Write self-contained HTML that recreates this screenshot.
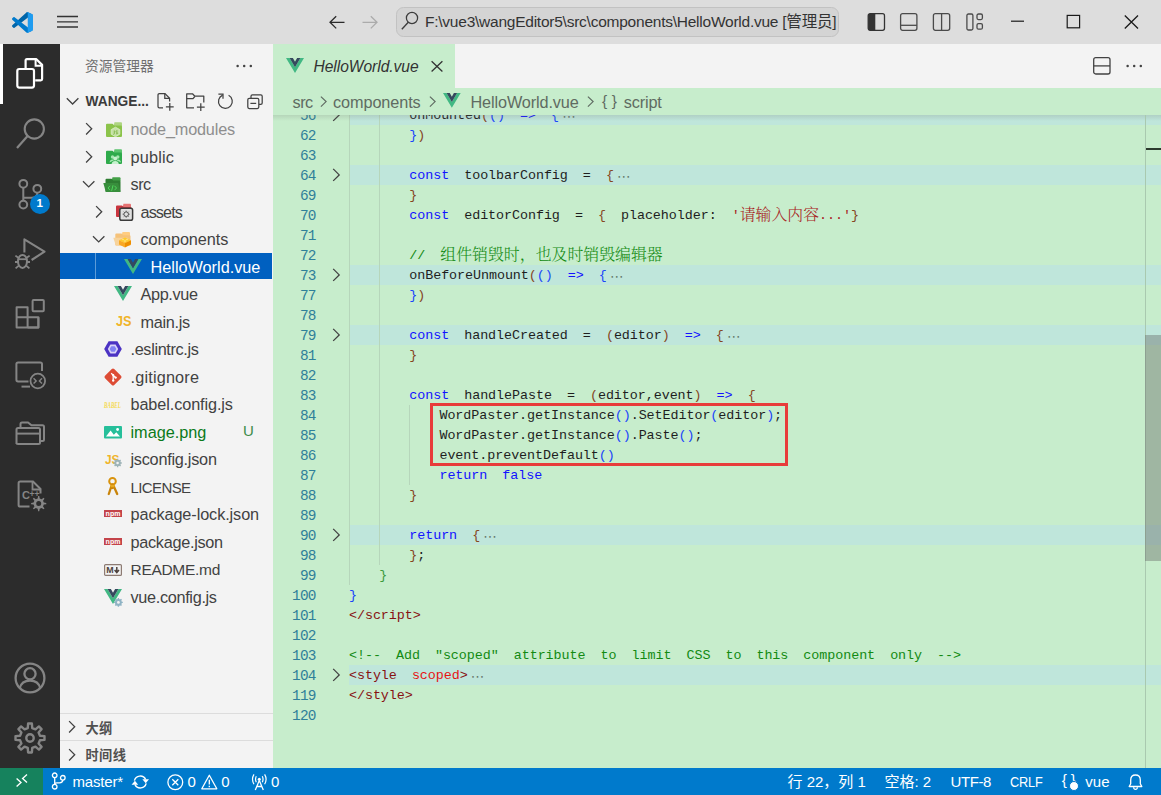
<!DOCTYPE html>
<html lang="zh-CN"><head><meta charset="utf-8"><title>HelloWorld.vue - wangEditor5 - Visual Studio Code</title>
<style>
*{box-sizing:border-box;margin:0;padding:0}
html,body{width:1161px;height:795px;overflow:hidden;background:#c7edcc}
body{position:relative;font-family:"Liberation Sans", "Noto Sans CJK SC", sans-serif;font-size:16.25px;color:#3b3b3b}
.abs{position:absolute}
svg{display:block;overflow:visible}
#titlebar{position:absolute;left:0;top:0;width:1161px;height:44px;background:#dddddd}
#activity{position:absolute;left:0;top:44px;width:60px;height:724px;background:#2c2c2c}
#sidebar{position:absolute;left:60px;top:44px;width:213px;height:724px;background:#f3f3f3;overflow:hidden}
#tabs{position:absolute;left:273px;top:44px;width:888px;height:44px;background:#f3f3f3}
#crumbs{position:absolute;left:273px;top:88px;width:888px;height:27px;background:#c7edcc;color:#5f6b62;z-index:3;white-space:nowrap}
#code{position:absolute;left:273px;top:114px;width:888px;height:654px;background:#c7edcc;overflow:hidden}
#status{position:absolute;left:0;top:768px;width:1161px;height:27px;background:#007acc;color:#fff;font-size:15px;white-space:nowrap}
.t{position:absolute;white-space:nowrap;line-height:1}
.row{position:absolute;left:0;width:213px;height:27.5px}
.row .lbl{position:absolute;top:0;line-height:27.5px;white-space:nowrap;font-size:16.25px;color:#3b3b3b}
.ln{position:absolute;left:0;width:42.800px;text-align:right;color:#2f8099;font-family:"Liberation Mono", "Noto Serif CJK SC", monospace;font-size:14.4px;line-height:20px;height:20px;letter-spacing:-0.680px;padding-top:1.700px}
.cl{position:absolute;left:76px;white-space:pre;font-family:"Liberation Mono", "Noto Serif CJK SC", monospace;font-size:13.4px;line-height:20px;height:20px;letter-spacing:-0.067px;word-spacing:7.1px;color:#1e1e1e;padding-top:1.5px}
.fold{position:absolute;left:76px;width:812px;height:20px;background:#bfe6db}
.k{color:#1212ff}.b1{color:#1a45fa}.b2{color:#3d9a3d}.b3{color:#85461f}.s{color:#a82222}.c{color:#128a12}.tg{color:#871212}.at{color:#e61414}
.cj{font-family:"Noto Serif CJK SC",serif;font-size:15.9px;letter-spacing:0;font-weight:300;line-height:0;position:relative;top:1px}
.el{font-family:"DejaVu Sans",sans-serif;font-size:13.500px;letter-spacing:0;margin-left:3.200px;position:relative;top:2px;line-height:0;color:#667a6d}
.guide{position:absolute;width:1px;background:#b6d6bb}
</style></head>
<body>
<div id="titlebar">
<svg class="abs" style="left:12px;top:11.500px" width="21" height="21" viewBox="0 0 100 100">
<path d="M96.46 10.8L75.86 0.88C73.47-0.27 70.62 0.21 68.75 2.08L1.3 63.58C-0.52 65.24-0.51 68.09 1.3 69.75L6.81 74.75C8.3 76.1 10.53 76.2 12.13 74.99L93.36 13.37C96.09 11.3 100 13.25 100 16.67V16.43C100 14.03 98.62 11.84 96.46 10.8Z" fill="#0065A9"/>
<path d="M96.46 89.2L75.86 99.12C73.47 100.27 70.62 99.79 68.75 97.92L1.3 36.42C-0.52 34.76-0.51 31.91 1.3 30.25L6.81 25.25C8.3 23.9 10.53 23.8 12.13 25.01L93.36 86.63C96.09 88.7 100 86.75 100 83.33V83.57C100 85.97 98.62 88.16 96.46 89.2Z" fill="#007ACC"/>
<path d="M75.86 99.13C73.47 100.27 70.62 99.79 68.75 97.92C71.06 100.22 75 98.59 75 95.33V4.67C75 1.41 71.06-0.22 68.75 2.08C70.62 0.21 73.47-0.27 75.86 0.87L96.46 10.78C98.62 11.82 100 14.01 100 16.41V83.59C100 85.99 98.62 88.18 96.46 89.22L75.86 99.13Z" fill="#1F9CF0"/>
</svg>
<svg class="abs" style="left:57px;top:14px" width="22" height="16" viewBox="0 0 22 16"><path d="M0 2.5H21M0 7.8H21M0 13H21" stroke="#333" stroke-width="1.3" fill="none"/></svg>
<svg class="abs" style="left:329px;top:15px" width="16" height="14" viewBox="0 0 16 14"><path d="M15.5 7.3H1.2M7.2 1.2L1 7.3L7.2 13.4" stroke="#2b2b2b" stroke-width="1.3" fill="none"/></svg>
<svg class="abs" style="left:362px;top:15px" width="16" height="14" viewBox="0 0 16 14"><path d="M0.5 7.3H14.8M8.8 1.2L15 7.3L8.8 13.4" stroke="#ababab" stroke-width="1.3" fill="none"/></svg>
<div class="abs" style="left:396px;top:7px;width:443px;height:30px;border:1px solid #c2c2c2;border-radius:7.500px;background:#d4d4d4"></div>
<svg class="abs" style="left:401px;top:12px" width="18" height="18" viewBox="0 0 18 18"><circle cx="11" cy="6" r="5.600" stroke="#3c3c3c" stroke-width="1.250" fill="none"/><path d="M7.300 10.200L0.800 17.300" stroke="#3c3c3c" stroke-width="1.350" fill="none"/></svg>
<div class="t" id="cmdtxt" style="left:425px;top:14.400px;font-size:15.500px;color:#333;letter-spacing:-0.240px">F:\vue3\wangEditor5\src\components\HelloWorld.vue [管理员]</div>
<svg class="abs" style="left:867px;top:13px" width="19" height="18" viewBox="0 0 19 18"><rect x="1.2" y="0.7" width="16.3" height="16.6" rx="2" stroke="#333" stroke-width="1.3" fill="none"/><path d="M1.2 2.2Q1.2 0.7 2.7 0.7H8.3V17.3H2.7Q1.2 17.3 1.2 15.8Z" fill="#333"/></svg>
<svg class="abs" style="left:899px;top:13px" width="19" height="18" viewBox="0 0 19 18"><rect x="1.6" y="0.7" width="16.3" height="16.6" rx="2" stroke="#4a4a4a" stroke-width="1.3" fill="none"/><path d="M1.6 12.3H17.9" stroke="#4a4a4a" stroke-width="1.3"/></svg>
<svg class="abs" style="left:932px;top:13px" width="19" height="18" viewBox="0 0 19 18"><rect x="1.4" y="0.7" width="16.3" height="16.6" rx="2" stroke="#4a4a4a" stroke-width="1.3" fill="none"/><path d="M9.6 0.7V17.3" stroke="#4a4a4a" stroke-width="1.3"/></svg>
<svg class="abs" style="left:966px;top:13px" width="18" height="18" viewBox="0 0 18 18"><rect x="0.9" y="1" width="6" height="16" rx="1.5" stroke="#4a4a4a" stroke-width="1.3" fill="none"/><rect x="11" y="1" width="5.4" height="5.6" rx="1.5" stroke="#4a4a4a" stroke-width="1.3" fill="none"/><rect x="11" y="10.6" width="5.4" height="5.6" rx="1.5" stroke="#4a4a4a" stroke-width="1.3" fill="none"/></svg>
<svg class="abs" style="left:1011px;top:20px" width="14" height="3" viewBox="0 0 14 3"><path d="M0 1.2H13" stroke="#1a1a1a" stroke-width="1.2"/></svg>
<svg class="abs" style="left:1066px;top:14px" width="15" height="15" viewBox="0 0 15 15"><rect x="1.2" y="1.4" width="12.4" height="12.4" stroke="#1a1a1a" stroke-width="1.2" fill="none"/></svg>
<svg class="abs" style="left:1124px;top:15px" width="15" height="14" viewBox="0 0 15 14"><path d="M0.8 0.5L14 13.5M14 0.5L0.8 13.5" stroke="#1a1a1a" stroke-width="1.3"/></svg>
</div>
<div id="activity">
<div class="abs" style="left:0;top:0;width:2.5px;height:60px;background:#ffffff"></div>
<svg class="abs" style="left:15px;top:13px" width="31" height="33" viewBox="0 0 31 33">
<path d="M10.600 11V3.500Q10.600 2.200 11.900 2.200H21.400L27.100 7.900V22.100Q27.100 23.400 25.800 23.400H20.200" stroke="#fff" stroke-width="2.200" fill="none" stroke-linejoin="round"/>
<path d="M20.600 2.400V8.700H26.900" stroke="#fff" stroke-width="2" fill="none"/>
<rect x="2.300" y="12" width="16.700" height="18.600" rx="2" stroke="#fff" stroke-width="2.200" fill="none"/>
</svg>
<svg class="abs" style="left:15px;top:73px" width="31" height="33" viewBox="0 0 31 33">
<circle cx="19.3" cy="12" r="9.6" stroke="#858585" stroke-width="2.1" fill="none"/>
<path d="M12.6 19L2 31" stroke="#858585" stroke-width="2.2" fill="none"/>
</svg>
<svg class="abs" style="left:17px;top:134px" width="28" height="33" viewBox="0 0 28 33">
<circle cx="6.3" cy="5.8" r="3.9" stroke="#858585" stroke-width="2" fill="none"/>
<circle cx="6.3" cy="26.6" r="3.9" stroke="#858585" stroke-width="2" fill="none"/>
<circle cx="20.3" cy="10.8" r="3.9" stroke="#858585" stroke-width="2" fill="none"/>
<path d="M6.3 9.8V22.6M20.3 14.8Q20.3 19.8 14.5 19.8H6.5" stroke="#858585" stroke-width="2" fill="none"/>
</svg>
<div class="abs" style="left:30px;top:150px;width:19.5px;height:19.5px;border-radius:10px;background:#007acc;color:#fff;font-size:11.5px;font-weight:bold;text-align:center;line-height:19.5px">1</div>
<svg class="abs" style="left:13px;top:193px" width="34" height="34" viewBox="0 0 34 34">
<path d="M11.400 15.600V2.300L31.500 14.600L18.600 23" stroke="#858585" stroke-width="2.100" fill="none" stroke-linejoin="round"/>
<ellipse cx="9.500" cy="24.400" rx="4.500" ry="6.500" stroke="#858585" stroke-width="2" fill="none"/>
<path d="M5.200 22.200H13.800" stroke="#858585" stroke-width="1.800" fill="none"/>
<path d="M2.400 18.600L5.300 20.800M16.600 18.600L13.700 20.800M2 25H5M14 25H17M2.600 31.400L5.800 28.600M16.400 31.400L13.200 28.600" stroke="#858585" stroke-width="1.800" fill="none"/>
</svg>
<svg class="abs" style="left:14px;top:254px" width="32" height="32" viewBox="0 0 32 32">
<path d="M2.6 9.2H13.6V29.4H2.6ZM2.6 19.3H24.4V29.4H13.6M13.6 19.3" stroke="#858585" stroke-width="2" fill="none" stroke-linejoin="round"/>
<path d="M13.6 29.4H24.4V19.3" stroke="#858585" stroke-width="2" fill="none" stroke-linejoin="round"/>
<rect x="18.6" y="2" width="11.2" height="11.2" rx="1" stroke="#858585" stroke-width="2" fill="none"/>
</svg>
<svg class="abs" style="left:14px;top:316px" width="34" height="30" viewBox="0 0 34 30">
<path d="M14.5 21.4H4Q2.4 21.4 2.4 19.8V4Q2.4 2.4 4 2.4H26.4Q28 2.4 28 4V11" stroke="#858585" stroke-width="2" fill="none"/>
<path d="M7.5 26.6H16" stroke="#858585" stroke-width="2" fill="none"/>
<circle cx="23.8" cy="21" r="7.3" stroke="#858585" stroke-width="1.8" fill="none"/>
<path d="M19.6 18.3L22.2 20.9L19.6 23.5M28 18.3L25.4 20.9L28 23.5" stroke="#858585" stroke-width="1.4" fill="none"/>
</svg>
<svg class="abs" style="left:14px;top:376px" width="32" height="26" viewBox="0 0 32 26">
<path d="M2.5 24V9.5Q2.5 8 4 8H24.5Q26 8 26 9.5V22.5Q26 24 24.5 24H4Q2.5 24 2.5 22.500Z" stroke="#858585" stroke-width="2" fill="none"/>
<path d="M2.5 13.6H26" stroke="#858585" stroke-width="2" fill="none"/>
<path d="M6.5 7.6V4Q6.500 2.500 8 2.500H14L17.500 5.200H28.500Q30 5.200 30 6.700V19.500Q30 21 28.500 21H26.500" stroke="#858585" stroke-width="2" fill="none"/>
</svg>
<svg class="abs" style="left:16px;top:435px" width="32" height="34" viewBox="0 0 32 34">
<path d="M13.5 27.5H4.2Q2.600 27.500 2.600 25.900V4.200Q2.600 2.600 4.200 2.600H17L24.500 10V14.500" stroke="#858585" stroke-width="2" fill="none"/>
<path d="M16.5 3V10.500H24" stroke="#858585" stroke-width="1.8" fill="none"/>
<text x="6" y="19.500" font-family="Liberation Sans, sans-serif" font-weight="bold" font-size="11" fill="#858585">C</text>
<text x="13.600" y="18" font-family="Liberation Sans, sans-serif" font-weight="bold" font-size="8.500" fill="#858585" textLength="10" lengthAdjust="spacingAndGlyphs">++</text>
<path d="M21.69 19.50L22.12 17.02L23.28 17.02L23.71 19.50L25.59 20.28L27.65 18.83L28.47 19.65L27.02 21.71L27.80 23.59L30.28 24.02L30.28 25.18L27.80 25.61L27.02 27.49L28.47 29.55L27.65 30.37L25.59 28.92L23.71 29.70L23.28 32.18L22.12 32.18L21.69 29.70L19.81 28.92L17.75 30.37L16.93 29.55L18.38 27.49L17.60 25.61L15.12 25.18L15.12 24.02L17.60 23.59L18.38 21.71L16.93 19.65L17.75 18.83L19.81 20.28Z M25.2 24.6A2.5 2.5 0 1 0 20.2 24.6A2.5 2.5 0 1 0 25.2 24.6Z" fill="#858585" fill-rule="evenodd"/>
</svg>
<svg class="abs" style="left:13px;top:617px" width="34" height="34" viewBox="0 0 34 34">
<circle cx="17" cy="17" r="14.400" stroke="#858585" stroke-width="2.300" fill="none"/>
<circle cx="17" cy="12.800" r="5.600" stroke="#858585" stroke-width="2.300" fill="none"/>
<path d="M6.800 27.200Q8.500 19.600 17 19.600Q25.500 19.600 27.200 27.200" stroke="#858585" stroke-width="2.300" fill="none"/>
</svg>
<svg class="abs" style="left:13px;top:677px" width="34" height="34" viewBox="0 0 34 34">
<path d="M14.77 7.05L15.11 2.52L18.89 2.52L19.23 7.05L22.47 8.39L25.90 5.43L28.57 8.10L25.61 11.53L26.95 14.77L31.48 15.11L31.48 18.89L26.95 19.23L25.61 22.47L28.57 25.90L25.90 28.57L22.47 25.61L19.23 26.95L18.89 31.48L15.11 31.48L14.77 26.95L11.53 25.61L8.10 28.57L5.43 25.90L8.39 22.47L7.05 19.23L2.52 18.89L2.52 15.11L7.05 14.77L8.39 11.53L5.43 8.10L8.10 5.43L11.53 8.39Z" stroke="#858585" stroke-width="2.400" fill="none" stroke-linejoin="round"/>
<circle cx="17" cy="17" r="3.700" stroke="#858585" stroke-width="2.400" fill="none"/>
</svg>
</div>
<div id="sidebar">
<div class="t" id="sbtitle" style="left:25px;top:16px;font-size:13.75px;color:#6f6f6f">资源管理器</div>
<svg class="abs" style="left:176px;top:20px" width="17" height="4" viewBox="0 0 17 4"><circle cx="1.6" cy="2" r="1.25" fill="#424242"/><circle cx="8.2" cy="2" r="1.25" fill="#424242"/><circle cx="14.8" cy="2" r="1.25" fill="#424242"/></svg>
<svg class="abs" style="left:6px;top:53px" width="14" height="9" viewBox="0 0 14 9"><path d="M0.8 1.2L6.6 7L12.4 1.2" stroke="#424242" stroke-width="1.3" fill="none"/></svg>
<div class="t" id="sbsec" style="left:25.500px;top:50.500px;font-size:13.75px;font-weight:bold;color:#3b3b3b">WANGE...</div>
<svg class="abs" style="left:97.400px;top:48.800px" width="19" height="19" viewBox="0 0 19 19">
<path d="M6 14.800H2.400Q1 14.800 1 13.400V2Q1 0.600 2.400 0.600H8L12.600 5.200V8.500" stroke="#424242" stroke-width="1.250" fill="none"/>
<path d="M7.800 0.800V5.400H12.400" stroke="#424242" stroke-width="1.250" fill="none"/>
<path d="M12.800 10V17.800M8.900 13.900H16.700" stroke="#424242" stroke-width="1.250" fill="none"/></svg>
<svg class="abs" style="left:126px;top:48.800px" width="20" height="19" viewBox="0 0 20 19">
<path d="M8 14.800H0.700V0.800H6.500L8.600 3H17.800V9.500" stroke="#424242" stroke-width="1.250" fill="none" stroke-linejoin="round"/>
<path d="M0.700 5.700H7L8.800 3.500" stroke="#424242" stroke-width="1.250" fill="none"/>
<path d="M14.800 10.200V18M10.900 14.100H18.700" stroke="#424242" stroke-width="1.250" fill="none"/></svg>
<svg class="abs" style="left:157px;top:48.800px" width="17" height="17" viewBox="0 0 17 17">
<path d="M5.600 2.100A6.900 6.900 0 1 0 11.600 2.300" stroke="#424242" stroke-width="1.250" fill="none"/>
<path d="M1.400 1.200H6V5.800" stroke="#424242" stroke-width="1.250" fill="none"/></svg>
<svg class="abs" style="left:187px;top:49.700px" width="17" height="16" viewBox="0 0 17 16">
<path d="M4 4V2.200Q4 0.800 5.400 0.800H13.800Q15.200 0.800 15.200 2.200V9Q15.200 10.400 13.800 10.400H12" stroke="#424242" stroke-width="1.250" fill="none"/>
<rect x="0.800" y="4.300" width="11" height="10.200" rx="1.400" stroke="#424242" stroke-width="1.250" fill="none"/>
<path d="M3.400 9.400H9.200" stroke="#424242" stroke-width="1.250" fill="none"/></svg>
<svg class="abs" style="left:24.7px;top:78px" width="9" height="14" viewBox="0 0 9 14"><path d="M1.100 1.100L6.700 6.800L1.100 12.500" stroke="#424242" stroke-width="1.300" fill="none"/></svg>
<div class="abs" style="left:44.8px;top:76.5px"><svg width="18" height="17" viewBox="0 0 18 17"><path d="M9.500 1.200H16Q17 1.200 17 2.200V5H8.500Z" fill="#aed581"/><path d="M1 3.800Q1 2.800 2 2.800H7.500L9.300 4.400H16Q17 4.400 17 5.400V15Q17 16 16 16H2Q1 16 1 15Z" fill="#8bc34a"/><path d="M10.500 6.200L14.800 8.600V13.200L10.500 15.700L6.200 13.200V8.600Z" fill="#c5e1a5" stroke="#dcedc8" stroke-width="0.800"/><path d="M9.300 9.500V12.600Q9.300 13.400 8.400 13.300M11 12.700Q12.600 13.200 12.700 12.300Q12.700 11.600 11.800 11.400Q10.800 11.200 10.900 10.400Q11.200 9.500 12.700 10" stroke="#7cb342" stroke-width="0.900" fill="none"/></svg></div>
<div class="t lbl" style="left:70.5px;top:72px;font-size:16.25px;line-height:27.500px;color:#424242;letter-spacing:-0.18px;color:#8e8e8e">node_modules</div>
<svg class="abs" style="left:24.7px;top:105.5px" width="9" height="14" viewBox="0 0 9 14"><path d="M1.100 1.100L6.700 6.800L1.100 12.500" stroke="#424242" stroke-width="1.300" fill="none"/></svg>
<div class="abs" style="left:44.8px;top:104px"><svg width="18" height="17" viewBox="0 0 18 17"><path d="M9.500 1.200H16Q17 1.200 17 2.200V5H8.500Z" fill="#5bc46f"/><path d="M1 3.800Q1 2.800 2 2.800H7.500L9.300 4.400H16Q17 4.400 17 5.400V15Q17 16 16 16H2Q1 16 1 15Z" fill="#2eaa4b"/><circle cx="7.500" cy="9" r="1.700" fill="#a5e6b0"/><circle cx="12.800" cy="9" r="1.700" fill="#a5e6b0"/><circle cx="10.200" cy="10.600" r="2" fill="#c8f2cf"/><path d="M4.500 14.500Q5 11.500 7.500 11.600Q8.500 11.600 9 12.300M16 14.500Q15.500 11.500 12.800 11.600Q12 11.600 11.400 12.300" fill="#a5e6b0"/><path d="M6.600 16Q7 13 10.200 13Q13.400 13 13.800 16Z" fill="#c8f2cf"/></svg></div>
<div class="t lbl" style="left:70.5px;top:99.5px;font-size:16.25px;line-height:27.500px;color:#424242;letter-spacing:0.2px;">public</div>
<svg class="abs" style="left:21.9px;top:135.5px" width="14" height="9" viewBox="0 0 14 9"><path d="M1 1.200L6.700 6.900L12.400 1.200" stroke="#424242" stroke-width="1.300" fill="none"/></svg>
<div class="abs" style="left:43px;top:131.5px"><svg width="19" height="17" viewBox="0 0 19 17"><path d="M9.500 1.200H16.500Q17.500 1.200 17.500 2.200V5H8.500Z" fill="#43a047"/><path d="M2.500 3.800Q2.500 2.800 3.500 2.800H8.500L10.300 4.400H16.500Q17.500 4.400 17.500 5.400V15Q17.500 16 16.500 16H3.500Q2.500 16 2.500 15Z" fill="#2e7d32"/><path d="M0.300 7H15.200L17.600 16H2.800Z" fill="#388e3c"/><path d="M7 9.800L5 12L7 14.200M11.500 9.800L13.500 12L11.500 14.200M10 9.300L8.600 14.800" stroke="#4fd85c" stroke-width="1" fill="none"/></svg></div>
<div class="t lbl" style="left:70.5px;top:127px;font-size:16.25px;line-height:27.500px;color:#424242;letter-spacing:-0.5px;">src</div>
<svg class="abs" style="left:35.2px;top:160.5px" width="9" height="14" viewBox="0 0 9 14"><path d="M1.100 1.100L6.700 6.800L1.100 12.500" stroke="#424242" stroke-width="1.300" fill="none"/></svg>
<div class="abs" style="left:54.8px;top:158.5px"><svg width="19" height="18" viewBox="0 0 19 18"><path d="M8.500 0.800H15Q16 0.800 16 1.800V5H7.500Z" fill="#e57373"/><path d="M1 3.400Q1 2.400 2 2.400H7L8.800 4H15.500Q16.500 4 16.500 5V13Q16.500 14 15.500 14H2Q1 14 1 13Z" fill="#c9353f"/><rect x="4.800" y="5.200" width="12.800" height="12" rx="1.800" fill="#e0e0e0" stroke="#3a3a3a" stroke-width="1.500"/><circle cx="11.200" cy="11.200" r="2.300" stroke="#555" stroke-width="1" fill="none"/><path d="M11.200 7.600V9M11.200 13.400V14.800M7.600 11.200H9M13.400 11.200H14.800M8.700 8.700L9.600 9.600M12.800 12.800L13.700 13.700M13.700 8.700L12.800 9.600M8.700 13.700L9.600 12.800" stroke="#555" stroke-width="0.800"/></svg></div>
<div class="t lbl" style="left:80.5px;top:154.5px;font-size:16.25px;line-height:27.500px;color:#424242;letter-spacing:-0.9px;">assets</div>
<svg class="abs" style="left:32.4px;top:190.5px" width="14" height="9" viewBox="0 0 14 9"><path d="M1 1.200L6.700 6.900L12.400 1.200" stroke="#424242" stroke-width="1.300" fill="none"/></svg>
<div class="abs" style="left:53px;top:186.5px"><svg width="19" height="17" viewBox="0 0 19 17"><path d="M9.500 1H16Q17 1 17 2V5H8.500Z" fill="#ffcc80"/><path d="M2.300 3.600Q2.300 2.600 3.300 2.600H8.500L10.300 4.200H16.500Q17.500 4.200 17.500 5.200V13.500Q17.500 14.500 16.500 14.500H3.300Q2.300 14.500 2.300 13.500Z" fill="#f5c27a"/><path d="M0.300 6.800H15L17.500 14.500H2.800Z" fill="#f7d39b"/><path d="M12 6.500L18 9.200L12 12L6 9.200Z" fill="#ffca28"/><path d="M6 9.200L12 12V16.500L6 13.600Z" fill="#f9a825"/><path d="M18 9.200L12 12V16.500L18 13.600Z" fill="#ef8f00"/><ellipse cx="10" cy="8.600" rx="1.400" ry="0.700" fill="#ffe082"/><ellipse cx="14" cy="8.600" rx="1.400" ry="0.700" fill="#ffe082"/><ellipse cx="12" cy="10" rx="1.400" ry="0.700" fill="#ffe082"/></svg></div>
<div class="t lbl" style="left:80.5px;top:182px;font-size:16.25px;line-height:27.500px;color:#424242;letter-spacing:-0.08px;">components</div>
<div class="abs" style="left:0;top:209.3px;width:212.300px;height:25.700px;background:#0060c0"></div>
<div class="abs" style="left:35px;top:209.3px;width:1px;height:25.700px;background:#5c9bd8"></div>
<div class="abs" style="left:63.5px;top:214.8px"><svg width="18" height="15" viewBox="0 0 18 15"><path d="M0 0H3.600L9 9.200L14.400 0H18L9 15Z" fill="#41b883"/><path d="M3.600 0H6.900L9 3.700L11.100 0H14.400L9 9.200Z" fill="#35495e"/></svg></div>
<div class="t lbl" style="left:90.5px;top:209.5px;font-size:16.25px;line-height:27.500px;color:#424242;letter-spacing:0px;color:#fff">HelloWorld.vue</div>
<div class="abs" style="left:53.5px;top:242.3px"><svg width="18" height="15" viewBox="0 0 18 15"><path d="M0 0H3.600L9 9.200L14.400 0H18L9 15Z" fill="#41b883"/><path d="M3.600 0H6.900L9 3.700L11.100 0H14.400L9 9.200Z" fill="#35495e"/></svg></div>
<div class="t lbl" style="left:80.5px;top:237px;font-size:16.25px;line-height:27.500px;color:#424242;letter-spacing:-0.36px;">App.vue</div>
<div class="abs" style="left:55.5px;top:271px"><svg width="17" height="13" viewBox="0 0 17 13"><text x="0" y="11.300" font-family="Liberation Sans, sans-serif" font-weight="bold" font-size="14" fill="#f0b429" textLength="15.500" lengthAdjust="spacingAndGlyphs">JS</text></svg></div>
<div class="t lbl" style="left:80.5px;top:264.5px;font-size:16.25px;line-height:27.500px;color:#424242;letter-spacing:-0.29px;">main.js</div>
<div class="abs" style="left:44px;top:297px"><svg width="18" height="16" viewBox="0 0 18 16"><path d="M4.600 0.300H13.400L17.800 8L13.400 15.700H4.600L0.200 8Z" fill="#4b32c3"/><path d="M6.400 3.600H11.600L14.200 8L11.600 12.400H6.400L3.800 8Z" fill="#d9d3f7"/><path d="M7.300 5.200H10.700L12.400 8L10.700 10.800H7.300L5.600 8Z" fill="#8080f2"/></svg></div>
<div class="t lbl" style="left:70.5px;top:292px;font-size:16.25px;line-height:27.500px;color:#424242;letter-spacing:-0.35px;">.eslintrc.js</div>
<div class="abs" style="left:44px;top:323.5px"><svg width="18" height="18" viewBox="0 0 18 18"><rect x="2.500" y="2.500" width="13" height="13" rx="1.700" transform="rotate(45 9 9)" fill="#dd4c35"/><path d="M7.200 5.200L11.400 9.400M9.200 7.200V12.600" stroke="#fff" stroke-width="1.300" fill="none"/><circle cx="9.200" cy="12.600" r="1.200" fill="#fff"/><circle cx="11.600" cy="9.600" r="1.200" fill="#fff"/><circle cx="9.200" cy="7.200" r="1.100" fill="#fff"/></svg></div>
<div class="t lbl" style="left:70.5px;top:319.5px;font-size:16.25px;line-height:27.500px;color:#424242;letter-spacing:0.18px;">.gitignore</div>
<div class="abs" style="left:44px;top:355.5px"><svg width="18" height="10" viewBox="0 0 18 10"><text x="0" y="8" font-family="Liberation Serif, serif" font-style="italic" font-weight="bold" font-size="7.500" fill="#f5da55" textLength="17" lengthAdjust="spacingAndGlyphs">BABEL</text></svg></div>
<div class="t lbl" style="left:70.5px;top:347px;font-size:16.25px;line-height:27.500px;color:#424242;letter-spacing:-0.1px;">babel.config.js</div>
<div class="abs" style="left:44px;top:381.5px"><svg width="18" height="14" viewBox="0 0 18 14"><rect x="0" y="0" width="18" height="12.500" rx="1" fill="#26bf9a"/><path d="M2 10.600L6.600 4.400L9.800 8.800L12.300 6.200L16 10.600Z" fill="#fff"/><circle cx="13.600" cy="3.500" r="1.400" fill="#fff"/></svg></div>
<div class="t lbl" style="left:70.5px;top:374.5px;font-size:16.25px;line-height:27.500px;color:#424242;letter-spacing:0px;color:#0a7a1a">image.png</div>
<div class="abs" style="left:44px;top:408px"><svg width="18" height="15" viewBox="0 0 18 15"><text x="1" y="11.500" font-family="Liberation Sans, sans-serif" font-weight="bold" font-size="13.500" fill="#f0b429" textLength="14.500" lengthAdjust="spacingAndGlyphs">JS</text><circle cx="13.600" cy="11" r="3.200" fill="#9eb4b8"/><circle cx="13.600" cy="11" r="1.300" fill="#f3f3f3"/><path d="M13.600 6.800V15.200M9.400 11H17.800M10.600 8L16.600 14M16.600 8L10.600 14" stroke="#9eb4b8" stroke-width="1.300"/><circle cx="13.600" cy="11" r="1.300" fill="#f3f3f3"/></svg></div>
<div class="t lbl" style="left:70.5px;top:402px;font-size:16.25px;line-height:27.500px;color:#424242;letter-spacing:-0.25px;">jsconfig.json</div>
<div class="abs" style="left:47px;top:433px"><svg width="12" height="18" viewBox="0 0 12 18"><circle cx="5.500" cy="4.200" r="3.300" fill="none" stroke="#d9930d" stroke-width="2"/><path d="M5.500 7.500V11M4.600 8.500L1.800 17M6.400 8.500L10.200 17" stroke="#c9840a" stroke-width="2.300" stroke-linecap="round" fill="none"/><path d="M3.500 9H7.500" stroke="#e8a91f" stroke-width="2.500"/></svg></div>
<div class="t lbl" style="left:70.5px;top:429.5px;font-size:15px;line-height:27.500px;color:#424242;letter-spacing:-0.6px;">LICENSE</div>
<div class="abs" style="left:44px;top:466.2px"><svg width="18" height="9" viewBox="0 0 18 9"><rect x="0" y="0" width="18" height="7" fill="#c4444a"/><text x="1.600" y="5.600" font-family="Liberation Sans, sans-serif" font-weight="bold" font-size="8" fill="#fff" textLength="14.800" lengthAdjust="spacingAndGlyphs">npm</text></svg></div>
<div class="t lbl" style="left:70.5px;top:457px;font-size:16.25px;line-height:27.500px;color:#424242;letter-spacing:-0.09px;">package-lock.json</div>
<div class="abs" style="left:44px;top:493.7px"><svg width="18" height="9" viewBox="0 0 18 9"><rect x="0" y="0" width="18" height="7" fill="#c4444a"/><text x="1.600" y="5.600" font-family="Liberation Sans, sans-serif" font-weight="bold" font-size="8" fill="#fff" textLength="14.800" lengthAdjust="spacingAndGlyphs">npm</text></svg></div>
<div class="t lbl" style="left:70.5px;top:484.5px;font-size:16.25px;line-height:27.500px;color:#424242;letter-spacing:-0.29px;">package.json</div>
<div class="abs" style="left:44px;top:519.5px"><svg width="18" height="12" viewBox="0 0 18 12"><rect x="0.600" y="0.600" width="16.800" height="10.800" rx="1" fill="#f3f3f3" stroke="#8d7b73" stroke-width="1.200"/><text x="2.200" y="9" font-family="Liberation Sans, sans-serif" font-weight="bold" font-size="8.600" fill="#4e423d" textLength="7.400" lengthAdjust="spacingAndGlyphs">M</text><path d="M12.800 3V7.600M10.600 6L12.800 8.600L15 6" stroke="#4e423d" stroke-width="1.500" fill="none"/></svg></div>
<div class="t lbl" style="left:70.5px;top:512px;font-size:15.5px;line-height:27.500px;color:#424242;letter-spacing:-0.3px;">README.md</div>
<div class="abs" style="left:44px;top:544.5px"><svg width="19" height="18" viewBox="0 0 19 18"><path d="M0 0H3.600L9 9.200L14.400 0H18L9 15Z" fill="#41b883"/><path d="M3.600 0H6.900L9 3.700L11.100 0H14.400L9 9.200Z" fill="#35495e"/><circle cx="14.400" cy="13.400" r="3.400" fill="#8fb3c4"/><path d="M14.400 9V17.800M10 13.400H18.800M11.300 10.300L17.500 16.500M17.500 10.300L11.300 16.500" stroke="#8fb3c4" stroke-width="1.400"/><circle cx="14.400" cy="13.400" r="1.400" fill="#f3f3f3"/></svg></div>
<div class="t lbl" style="left:70.5px;top:539.5px;font-size:16.25px;line-height:27.500px;color:#424242;letter-spacing:-0.32px;">vue.config.js</div>
<div class="t" style="left:183px;top:372.5px;font-size:15px;line-height:27.500px;color:#3d8b48">U</div>
<div class="abs" style="left:0;top:669px;width:213px;height:1px;background:#dcdcdc"></div>
<div class="abs" style="left:0;top:696px;width:213px;height:1px;background:#dcdcdc"></div>
<svg class="abs" style="left:8.2px;top:676.2px" width="9" height="14" viewBox="0 0 9 14"><path d="M1.100 1.100L6.700 6.800L1.100 12.500" stroke="#424242" stroke-width="1.300" fill="none"/></svg>
<svg class="abs" style="left:8.2px;top:703.7px" width="9" height="14" viewBox="0 0 9 14"><path d="M1.100 1.100L6.700 6.800L1.100 12.500" stroke="#424242" stroke-width="1.300" fill="none"/></svg>
<div class="t" style="left:25.500px;top:677.500px;font-size:13.200px;font-weight:bold;color:#505050;letter-spacing:0.400px">大纲</div>
<div class="t" style="left:25.500px;top:705px;font-size:13.200px;font-weight:bold;color:#505050;letter-spacing:0.400px">时间线</div>
</div>
<div id="tabs">
<div class="abs" style="left:0;top:0;width:182.200px;height:44px;background:#c7edcc"></div>
<div class="abs" style="left:13px;top:14px"><svg width="18" height="15.2" viewBox="0 0 18 15"><path d="M0 0H3.600L9 9.200L14.400 0H18L9 15Z" fill="#41b883"/><path d="M3.600 0H6.900L9 3.700L11.100 0H14.400L9 9.200Z" fill="#35495e"/></svg></div>
<div class="t" id="tablbl" style="left:40.500px;top:14.500px;font-size:15.600px;font-style:italic;color:#333;letter-spacing:-0.050px">HelloWorld.vue</div>
<svg class="abs" style="left:158px;top:17px" width="12" height="11" viewBox="0 0 12 11"><path d="M0.600 0.300L11.400 10.500M11.400 0.300L0.600 10.500" stroke="#333" stroke-width="1.300"/></svg>
<svg class="abs" style="left:820px;top:13px" width="18" height="18" viewBox="0 0 18 18"><rect x="0.700" y="0.700" width="16.300" height="16.300" rx="2" stroke="#424242" stroke-width="1.300" fill="none"/><path d="M0.700 8.900H17" stroke="#424242" stroke-width="1.300"/></svg>
<svg class="abs" style="left:853px;top:20px" width="17" height="4" viewBox="0 0 17 4"><circle cx="1.600" cy="2" r="1.250" fill="#424242"/><circle cx="8.200" cy="2" r="1.250" fill="#424242"/><circle cx="14.800" cy="2" r="1.250" fill="#424242"/></svg>
</div>
<div id="crumbs">
<div class="t bc" style="left:19.500px;top:5.600px;line-height:17px;letter-spacing:-0.500px">src</div>
<svg class="abs" style="left:46.5px;top:8.300px" width="8" height="12" viewBox="0 0 8 12"><path d="M0.900 0.600L6.100 5.600L0.900 10.600" stroke="#5f6b62" stroke-width="1.200" fill="none"/></svg>
<div class="t bc" style="left:60px;top:5.600px;line-height:17px;letter-spacing:-0.090px">components</div>
<svg class="abs" style="left:156px;top:8.300px" width="8" height="12" viewBox="0 0 8 12"><path d="M0.900 0.600L6.100 5.600L0.900 10.600" stroke="#5f6b62" stroke-width="1.200" fill="none"/></svg>
<div class="abs" style="left:170.300px;top:5px"><svg width="17.7" height="14.8" viewBox="0 0 18 15"><path d="M0 0H3.600L9 9.200L14.400 0H18L9 15Z" fill="#41b883"/><path d="M3.600 0H6.900L9 3.700L11.100 0H14.400L9 9.200Z" fill="#35495e"/></svg></div>
<div class="t bc" style="left:197.500px;top:5.600px;line-height:17px;letter-spacing:-0.120px">HelloWorld.vue</div>
<svg class="abs" style="left:314px;top:8.300px" width="8" height="12" viewBox="0 0 8 12"><path d="M0.900 0.600L6.100 5.600L0.900 10.600" stroke="#5f6b62" stroke-width="1.200" fill="none"/></svg>
<div class="t bc" style="left:329px;top:4px;line-height:17px;font-size:15.500px;letter-spacing:4.500px">{}</div>
<div class="t bc" style="left:350.800px;top:5.600px;line-height:17px;letter-spacing:-0.170px">script</div>
</div>
<div id="code">
<div class="fold" style="top:-9.4px"></div>
<div class="fold" style="top:50.6px"></div>
<div class="fold" style="top:150.6px"></div>
<div class="fold" style="top:210.6px"></div>
<div class="fold" style="top:410.6px"></div>
<div class="fold" style="top:550.6px"></div>
<div class="guide" style="left:76px;top:0;height:470.6px"></div>
<div class="guide" style="left:106px;top:0;height:450.6px"></div>
<div class="guide" style="left:136px;top:290.6px;height:80px"></div>
<div class="ln" style="top:-9.4px">56</div>
<svg class="abs" style="left:58.500px;top:-6.4px" width="9" height="14" viewBox="0 0 9 14"><path d="M1.200 0.900L7.200 6.900L1.200 12.900" stroke="#424242" stroke-width="1.300" fill="none"/></svg>
<div class="cl" style="top:-9.4px">    onMounted<span class="b3">(</span><span class="b1">()</span> <span class="k">=&gt;</span> <span class="b1">{</span><span class="el">⋯</span></div>
<div class="ln" style="top:10.6px">62</div>
<div class="cl" style="top:10.6px">    <span class="b1">}</span><span class="b3">)</span></div>
<div class="ln" style="top:30.6px">63</div>
<div class="ln" style="top:50.6px">64</div>
<svg class="abs" style="left:58.500px;top:53.6px" width="9" height="14" viewBox="0 0 9 14"><path d="M1.200 0.900L7.200 6.900L1.200 12.900" stroke="#424242" stroke-width="1.300" fill="none"/></svg>
<div class="cl" style="top:50.6px">    <span class="k">const</span> toolbarConfig = <span class="b3">{</span><span class="el">⋯</span></div>
<div class="ln" style="top:70.6px">69</div>
<div class="cl" style="top:70.6px">    <span class="b3">}</span></div>
<div class="ln" style="top:90.6px">70</div>
<div class="cl" style="top:90.6px">    <span class="k">const</span> editorConfig = <span class="b3">{</span> placeholder: <span class="s">'<span class="cj">请输入内容</span>...'</span><span class="b3">}</span></div>
<div class="ln" style="top:110.6px">71</div>
<div class="ln" style="top:130.6px">72</div>
<div class="cl" style="top:130.6px">    <span class="c">// <span class="cj">组件销毁时，也及时销毁编辑器</span></span></div>
<div class="ln" style="top:150.6px">73</div>
<svg class="abs" style="left:58.500px;top:153.6px" width="9" height="14" viewBox="0 0 9 14"><path d="M1.200 0.900L7.200 6.900L1.200 12.900" stroke="#424242" stroke-width="1.300" fill="none"/></svg>
<div class="cl" style="top:150.6px">    onBeforeUnmount<span class="b3">(</span><span class="b1">()</span> <span class="k">=&gt;</span> <span class="b1">{</span><span class="el">⋯</span></div>
<div class="ln" style="top:170.6px">77</div>
<div class="cl" style="top:170.6px">    <span class="b1">}</span><span class="b3">)</span></div>
<div class="ln" style="top:190.6px">78</div>
<div class="ln" style="top:210.6px">79</div>
<svg class="abs" style="left:58.500px;top:213.6px" width="9" height="14" viewBox="0 0 9 14"><path d="M1.200 0.900L7.200 6.900L1.200 12.900" stroke="#424242" stroke-width="1.300" fill="none"/></svg>
<div class="cl" style="top:210.6px">    <span class="k">const</span> handleCreated = <span class="b3">(</span>editor<span class="b3">)</span> <span class="k">=&gt;</span> <span class="b3">{</span><span class="el">⋯</span></div>
<div class="ln" style="top:230.6px">81</div>
<div class="cl" style="top:230.6px">    <span class="b3">}</span></div>
<div class="ln" style="top:250.6px">82</div>
<div class="ln" style="top:270.6px">83</div>
<div class="cl" style="top:270.6px">    <span class="k">const</span> handlePaste = <span class="b3">(</span>editor,event<span class="b3">)</span> <span class="k">=&gt;</span> <span class="b3">{</span></div>
<div class="ln" style="top:290.6px">84</div>
<div class="cl" style="top:290.6px">      WordPaster.getInstance<span class="b1">()</span>.SetEditor<span class="b1">(</span>editor<span class="b1">)</span>;</div>
<div class="ln" style="top:310.6px">85</div>
<div class="cl" style="top:310.6px">      WordPaster.getInstance<span class="b1">()</span>.Paste<span class="b1">()</span>;</div>
<div class="ln" style="top:330.6px">86</div>
<div class="cl" style="top:330.6px">      event.preventDefault<span class="b1">()</span></div>
<div class="ln" style="top:350.6px">87</div>
<div class="cl" style="top:350.6px">      <span class="k">return</span> <span class="k">false</span></div>
<div class="ln" style="top:370.6px">88</div>
<div class="cl" style="top:370.6px">    <span class="b3">}</span></div>
<div class="ln" style="top:390.6px">89</div>
<div class="ln" style="top:410.6px">90</div>
<svg class="abs" style="left:58.500px;top:413.6px" width="9" height="14" viewBox="0 0 9 14"><path d="M1.200 0.900L7.200 6.900L1.200 12.900" stroke="#424242" stroke-width="1.300" fill="none"/></svg>
<div class="cl" style="top:410.6px">    <span class="k">return</span> <span class="b3">{</span><span class="el">⋯</span></div>
<div class="ln" style="top:430.6px">98</div>
<div class="cl" style="top:430.6px">    <span class="b3">}</span>;</div>
<div class="ln" style="top:450.6px">99</div>
<div class="cl" style="top:450.6px">  <span class="b2">}</span></div>
<div class="ln" style="top:470.6px">100</div>
<div class="cl" style="top:470.6px"><span class="b1">}</span></div>
<div class="ln" style="top:490.6px">101</div>
<div class="cl" style="top:490.6px"><span class="tg">&lt;/script&gt;</span></div>
<div class="ln" style="top:510.6px">102</div>
<div class="ln" style="top:530.6px">103</div>
<div class="cl" style="top:530.6px"><span class="c">&lt;!-- Add "scoped" attribute to limit CSS to this component only --&gt;</span></div>
<div class="ln" style="top:550.6px">104</div>
<svg class="abs" style="left:58.500px;top:553.6px" width="9" height="14" viewBox="0 0 9 14"><path d="M1.200 0.900L7.200 6.900L1.200 12.900" stroke="#424242" stroke-width="1.300" fill="none"/></svg>
<div class="cl" style="top:550.6px"><span class="tg">&lt;style</span> <span class="at">scoped</span><span class="tg">&gt;</span><span class="el">⋯</span></div>
<div class="ln" style="top:570.6px">119</div>
<div class="cl" style="top:570.6px"><span class="tg">&lt;/style&gt;</span></div>
<div class="ln" style="top:590.6px">120</div>
<div class="abs" style="left:0;top:1px;width:888px;height:6px;background:linear-gradient(rgba(120,130,120,0.220),rgba(120,130,120,0))"></div>
<div class="abs" style="left:157px;top:289px;width:358.300px;height:62.900px;border:3.100px solid #e83c3a"></div>
<div class="abs" style="left:872px;top:0;width:1px;height:654px;background:#a9c9af"></div>
<div class="abs" style="left:873px;top:34px;width:15px;height:2.200px;background:#2c3a2e"></div>
<div class="abs" style="left:872px;top:221.100px;width:16px;height:225.700px;background:rgba(100,100,100,0.4)"></div>
</div>
<div id="status">
<div class="abs" style="left:0;top:0;width:43px;height:27px;background:#16825d"></div>
<svg class="abs" style="left:16px;top:5.800px" width="12" height="13" viewBox="0 0 12 13"><path d="M0.600 4.500L5 8.600L0.600 12.400M11 0.600L6.600 4.400L11 8.500" stroke="#fff" stroke-width="1.350" fill="none"/></svg>
<svg class="abs" style="left:51px;top:4px" width="16" height="18" viewBox="0 0 16 18">
<circle cx="3.700" cy="3.300" r="2.300" stroke="#fff" stroke-width="1.300" fill="none"/>
<circle cx="3.700" cy="14.700" r="2.300" stroke="#fff" stroke-width="1.300" fill="none"/>
<circle cx="11.800" cy="5.800" r="2.300" stroke="#fff" stroke-width="1.300" fill="none"/>
<path d="M3.700 5.600V12.400M11.800 8.100Q11.800 10.800 8.500 10.800H5.800Q3.700 10.800 3.700 12.400" stroke="#fff" stroke-width="1.300" fill="none"/></svg>
<div class="t sl" style="left:72.400px;top:6px;letter-spacing:-0.150px">master*</div>
<svg class="abs" style="left:131px;top:6px" width="19" height="16" viewBox="0 0 19 16">
<path d="M3.400 6.600A6 6 0 0 1 14.600 5.400" stroke="#fff" stroke-width="1.400" fill="none"/>
<path d="M15.200 9.400A6 6 0 0 1 4 10.600" stroke="#fff" stroke-width="1.400" fill="none"/>
<path d="M11.400 5.200H18L14.700 9.200Z" fill="#fff"/>
<path d="M0.600 10.800H7.200L3.900 6.800Z" fill="#fff"/></svg>
<svg class="abs" style="left:166.500px;top:5.500px" width="17" height="17" viewBox="0 0 17 17"><circle cx="8.300" cy="8.300" r="7.400" stroke="#fff" stroke-width="1.300" fill="none"/><path d="M5.300 5.300L11.300 11.300M11.300 5.300L5.300 11.300" stroke="#fff" stroke-width="1.300"/></svg>
<div class="t sl" style="left:187.500px;top:6px">0</div>
<svg class="abs" style="left:200.500px;top:5.500px" width="17" height="16" viewBox="0 0 17 16"><path d="M8.300 1.200L15.800 14.800H0.800Z" stroke="#fff" stroke-width="1.300" fill="none" stroke-linejoin="round"/><path d="M8.300 5.800V10.600M8.300 11.800V13.200" stroke="#fff" stroke-width="1.300"/></svg>
<div class="t sl" style="left:221.300px;top:6px">0</div>
<svg class="abs" style="left:251px;top:5px" width="17" height="18" viewBox="0 0 17 18">
<path d="M8.300 7.500L4.300 17M8.300 7.500L12.300 17M5.800 13.500H10.800" stroke="#fff" stroke-width="1.300" fill="none"/>
<circle cx="8.300" cy="6.300" r="1.500" fill="#fff"/>
<path d="M5.300 3.300Q3.800 6.300 5.300 9.300M11.300 3.300Q12.800 6.300 11.300 9.300M3 1.400Q0 6.300 3 11.200M13.600 1.400Q16.600 6.300 13.600 11.200" stroke="#fff" stroke-width="1.200" fill="none"/></svg>
<div class="t sl" style="left:271px;top:6px">0</div>
<div class="t sl" id="st_pos" style="left:787.500px;top:6px">行 22，列 1</div>
<div class="t sl" id="st_sp" style="left:884.500px;top:6px">空格: 2</div>
<div class="t sl" id="st_enc" style="left:950.600px;top:6px;letter-spacing:-0.450px">UTF-8</div>
<div class="t sl" id="st_eol" style="left:1010.200px;top:6px;transform:scaleX(0.850);transform-origin:0 0;letter-spacing:-0.200px">CRLF</div>
<div class="t sl" id="st_br" style="left:1061.800px;top:3.600px;font-size:15.500px;letter-spacing:3.800px">{}</div>
<div class="abs" style="left:1068.800px;top:12.800px;width:10px;height:10px;border-radius:5px;background:#fff;border:1.200px solid #007acc"></div>
<div class="t sl" id="st_lang" style="left:1085.300px;top:6px">vue</div>
<svg class="abs" style="left:1127px;top:5px" width="17" height="18" viewBox="0 0 17 18">
<path d="M2.200 13.500H14.800L13.300 10.800V7Q13.300 2 8.500 2Q3.700 2 3.700 7V10.800Z" stroke="#fff" stroke-width="1.300" fill="none" stroke-linejoin="round"/>
<path d="M6.600 14.200Q6.800 16.400 8.500 16.400Q10.200 16.400 10.400 14.200" stroke="#fff" stroke-width="1.300" fill="none"/></svg>
</div>
</body></html>
